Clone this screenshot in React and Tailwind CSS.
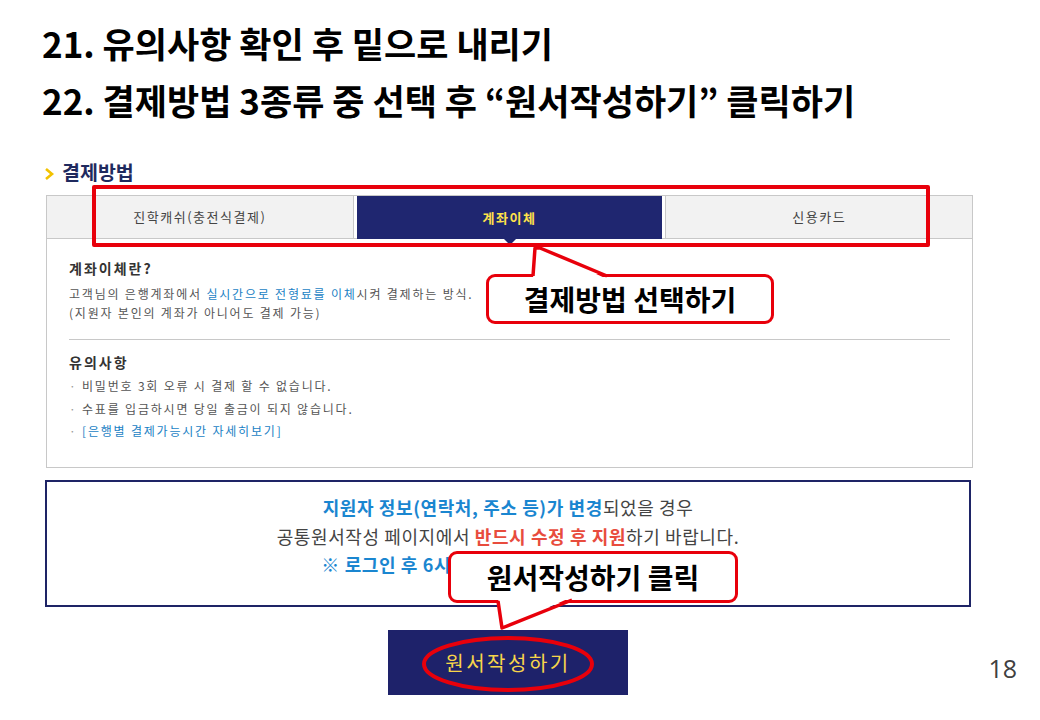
import React from "react";

const KR = { fontFamily: '"Noto Sans CJK KR", "Noto Sans", sans-serif' };

export default function App() {
  return (
    <div className="relative w-[1040px] h-[720px] bg-white overflow-hidden" style={KR}>
      {/* Titles */}
      <div className="pl-[42px] pt-[14px] text-black font-bold text-[35px] leading-[57px] tracking-[0px]">
        <div>21. 유의사항 확인 후 밑으로 내리기</div>
        <div>22. 결제방법 3종류 중 선택 후 “원서작성하기” 클릭하기</div>
      </div>

      {/* Section header */}
      <div className="mt-[34px] ml-[44px] flex items-center h-[20px]">
        <svg width="12" height="14" viewBox="0 0 12 14" className="mt-[4px]">
          <polyline points="2,2 8,7 2,12" fill="none" stroke="#f2c200" strokeWidth="2.6" />
        </svg>
        <span className="ml-[6px] text-[19.5px] font-bold text-[#1f2a5e] leading-[20px]">결제방법</span>
      </div>

      {/* Payment panel */}
      <div className="mt-[13px] ml-[46px] w-[927px] h-[273px] border border-[#c8c8c8]">
        <div className="flex gap-[3px] h-[43px] border-b border-[#c8c8c8]">
          <div className="flex-1 bg-[#f2f2f2] border-r border-[#c8c8c8] flex items-center justify-center text-[13px] text-[#444] tracking-[1.5px]">
            진학캐쉬(충전식결제)
          </div>
          <div className="relative flex-1 bg-[#1f2670] flex items-center justify-center text-[13px] font-bold text-[#ffe14a] tracking-[1.5px] -mb-px">
            계좌이체
            <div className="absolute left-1/2 -translate-x-1/2 top-full w-0 h-0 border-l-[6px] border-r-[6px] border-t-[6px] border-l-transparent border-r-transparent border-t-[#1f2670]" />
          </div>
          <div className="flex-1 bg-[#f2f2f2] border-l border-[#c8c8c8] flex items-center justify-center text-[13px] text-[#444] tracking-[1.5px]">
            신용카드
          </div>
        </div>

        <div className="px-[22px] pt-[19px]">
          <div className="text-[14px] font-bold text-[#333] leading-[20px] tracking-[2px]">계좌이체란?</div>
          <div className="mt-[6px] text-[12px] text-[#555] leading-[19px] tracking-[1.8px]">
            <div>
              고객님의 은행계좌에서 <span className="text-[#1a7fc4]">실시간으로 전형료를 이체</span>시켜 결제하는 방식.
            </div>
            <div>(지원자 본인의 계좌가 아니어도 결제 가능)</div>
          </div>
          <div className="mt-[17px] h-px bg-[#c8c8c8]" />
          <div className="mt-[12px] text-[14px] font-bold text-[#333] leading-[20px] tracking-[2px]">유의사항</div>
          <div className="mt-[3px] text-[12px] text-[#555] leading-[22.5px] tracking-[1.8px]">
            <div><span className="text-[#999]">·</span> 비밀번호 3회 오류 시 결제 할 수 없습니다.</div>
            <div><span className="text-[#999]">·</span> 수표를 입금하시면 당일 출금이 되지 않습니다.</div>
            <div><span className="text-[#999]">·</span> <span className="text-[#1a7fc4]">[은행별 결제가능시간 자세히보기]</span></div>
          </div>
        </div>
      </div>

      {/* Notice box */}
      <div className="mt-[12px] ml-[45px] w-[926px] h-[127px] border-2 border-[#1e2466] pt-[11px] text-center text-[18px] leading-[28.5px] tracking-[0.6px] text-[#444]">
        <div>
          <span className="font-bold text-[#1a86d0]">지원자 정보(연락처, 주소 등)가 변경</span>되었을 경우
        </div>
        <div>
          공통원서작성 페이지에서 <span className="font-bold text-[#e84c3d]">반드시 수정 후 지원</span>하기 바랍니다.
        </div>
        <div className="font-bold text-[#1a86d0]">※ 로그인 후 6시간 동안 원서작성이 가능합니다.</div>
      </div>

      {/* Button row */}
      <div className="mt-[23px] flex items-end">
        <div className="relative ml-[388px] w-[240px] h-[65px] bg-[#1e226a] flex items-center justify-center text-[20px] text-[#f7d54a] tracking-[2.5px]">
          원서작성하기
          <svg className="absolute left-[33px] top-[5px]" width="174" height="58" viewBox="0 0 174 58">
            <ellipse cx="87" cy="29" rx="84" ry="26" fill="none" stroke="#e8000b" strokeWidth="4" />
          </svg>
        </div>
        <div className="ml-auto mr-[23px] mb-[12px] text-[25px] leading-[30px] text-[#404040]" style={{ fontFamily: '"Open Sans", "Liberation Sans", sans-serif' }}>
          18
        </div>
      </div>

      {/* Overlay: red frame around tabs */}
      <div className="absolute left-[92px] top-[185px] w-[838px] h-[62px] border-4 border-[#e8000b] rounded-[2px]" />

      {/* Callout 1 */}
      <div className="absolute left-[486px] top-[274px] w-[288px] h-[50px] bg-white border-[3px] border-[#e8000b] rounded-[9px] flex items-center justify-center text-[28px] font-bold text-black leading-none">
        결제방법 선택하기
      </div>
      <svg className="absolute left-0 top-0 pointer-events-none" width="1040" height="720">
        <polygon points="533,279 535,248 540,248 607,279" fill="white" />
        <polyline points="533,276 535,248 540,248 607,276" fill="none" stroke="#e8000b" strokeWidth="3.5" strokeLinejoin="round" />
      </svg>

      {/* Callout 2 */}
      <div className="absolute left-[448px] top-[551px] w-[290px] h-[52px] bg-white border-[3px] border-[#e8000b] rounded-[9px] flex items-center justify-center text-[28px] font-bold text-black leading-none">
        원서작성하기 클릭
      </div>
      <svg className="absolute left-0 top-0 pointer-events-none" width="1040" height="720">
        <polygon points="498,597 502,628 572,597" fill="white" />
        <polyline points="498,601 502,628 572,600" fill="none" stroke="#e8000b" strokeWidth="3.5" strokeLinejoin="round" />
      </svg>
    </div>
  );
}
